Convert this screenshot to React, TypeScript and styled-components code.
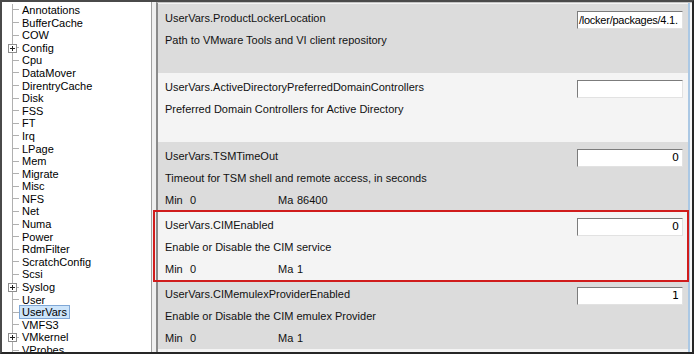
import React from "react";
import styled, { createGlobalStyle } from "styled-components";

const Global = createGlobalStyle`
  html, body { margin: 0; padding: 0; background: #fff; }
  body { font-family: "Liberation Sans", Arial, sans-serif; }
  * { box-sizing: border-box; }
`;

const Frame = styled.div`
  width: 694px;
  height: 354px;
  display: flex;
  border: 2px solid;
  border-color: #4a4a4a #262626 #262626 #4a4a4a;
  background: #f0f0f0;
  overflow: hidden;
`;

const Tree = styled.div`
  width: 150px;
  flex: none;
  background: #fff;
  border-right: 1px solid #a0a0a0;
  padding-top: 1.7px;
  display: flex;
  flex-direction: column;
  font-size: 11px;
  color: #000;
`;

const TreeItem = styled.div`
  height: 12.6px;
  display: flex;
  align-items: center;
  flex: none;
`;

const Connector = styled.div`
  position: relative;
  width: 17px;
  height: 100%;
  flex: none;
  background-image: linear-gradient(#b0b0b0, #b0b0b0), linear-gradient(#b0b0b0, #b0b0b0);
  background-size: 1px 100%, 7px 1px;
  background-position: 10px 0, 10px 50%;
  background-repeat: no-repeat;
`;

const Expander = styled.span`
  position: absolute;
  left: 6px;
  top: 50%;
  margin-top: -4px;
  width: 9px;
  height: 9px;
  border: 1px solid #8e8e8e;
  background-color: #fff;
  background-image: linear-gradient(#222, #222), linear-gradient(#222, #222);
  background-size: 5px 1px, 1px 5px;
  background-position: center, center;
  background-repeat: no-repeat;
`;

const Label = styled.span<{ $selected?: boolean }>`
  padding: 0 2px;
  line-height: 12px;
  border: 1px solid ${(p) => (p.$selected ? "#7fa7d6" : "transparent")};
  background: ${(p) => (p.$selected ? "#cce4fa" : "transparent")};
  white-space: nowrap;
`;

const Splitter = styled.div`
  width: 4px;
  flex: none;
  background: #f0f0f0;
`;

const Panel = styled.div`
  flex: 1;
  display: flex;
  background: #f7f7f7;
  border-left: 2px solid #8a8a8a;
  border-top: 1px solid #c4c4c4;
  padding-right: 2px;
`;

const Rows = styled.div`
  flex: 1;
  padding-top: 1px;
  background: #f4f4f4;
  border-right: 2px solid #abc8e4;
  display: flex;
  flex-direction: column;
`;

const Row = styled.div<{ $alt?: boolean; $marked?: boolean }>`
  position: relative;
  z-index: ${(p) => (p.$marked ? 1 : 0)};
  height: 69px;
  flex: none;
  display: flex;
  justify-content: space-between;
  background: ${(p) => (p.$alt ? "#f4f4f4" : "#dcdcdc")};
  ${(p) =>
    p.$marked &&
    `
    &::after {
      content: "";
      position: absolute;
      left: -5px;
      right: -1px;
      top: -1px;
      bottom: -2px;
      border: 2px solid #d01c1c;
      pointer-events: none;
    }
  `}
`;

const Info = styled.div`
  padding: 3px 0 0 7px;
  font-size: 11px;
  color: #111;
`;

const Line = styled.div`
  height: 22px;
  line-height: 22px;
  white-space: nowrap;
`;

const Limits = styled.div`
  height: 22px;
  line-height: 22px;
  display: grid;
  grid-template-columns: 25px 88px 19px auto;
  white-space: nowrap;
`;

const Field = styled.div<{ $align: "left" | "right" }>`
  margin: 7px 5px 0 0;
  width: 106px;
  height: 18px;
  background: #fff;
  border: 1px solid;
  border-color: #7c7c7c #e2e2e2 #e2e2e2 #7c7c7c;
  font-size: 11px;
  line-height: 16px;
  padding: ${(p) => (p.$align === "right" ? "0 3px 0 2px" : "0 0 0 1px")};
  letter-spacing: ${(p) => (p.$align === "right" ? "0" : "-0.25px")};
  text-align: ${(p) => p.$align};
  font-family: ${(p) => (p.$align === "right" ? '"DejaVu Sans", sans-serif' : '"Liberation Sans", Arial, sans-serif')};
  overflow: hidden;
  white-space: nowrap;
  color: #000;
`;

const treeItems: { name: string; expand?: boolean; selected?: boolean }[] = [
  { name: "Annotations" },
  { name: "BufferCache" },
  { name: "COW" },
  { name: "Config", expand: true },
  { name: "Cpu" },
  { name: "DataMover" },
  { name: "DirentryCache" },
  { name: "Disk" },
  { name: "FSS" },
  { name: "FT" },
  { name: "Irq" },
  { name: "LPage" },
  { name: "Mem" },
  { name: "Migrate" },
  { name: "Misc" },
  { name: "NFS" },
  { name: "Net" },
  { name: "Numa" },
  { name: "Power" },
  { name: "RdmFilter" },
  { name: "ScratchConfig" },
  { name: "Scsi" },
  { name: "Syslog", expand: true },
  { name: "User" },
  { name: "UserVars", selected: true },
  { name: "VMFS3" },
  { name: "VMkernel", expand: true },
  { name: "VProbes" },
];

type Setting = {
  key: string;
  desc: string;
  value: string;
  align: "left" | "right";
  min?: string;
  max?: string;
  marked?: boolean;
};

const settings: Setting[] = [
  { key: "UserVars.ProductLockerLocation", desc: "Path to VMware Tools and VI client repository", value: "/locker/packages/4.1.", align: "left" },
  { key: "UserVars.ActiveDirectoryPreferredDomainControllers", desc: "Preferred Domain Controllers for Active Directory", value: "", align: "left" },
  { key: "UserVars.TSMTimeOut", desc: "Timeout for TSM shell and remote access, in seconds", value: "0", align: "right", min: "0", max: "86400" },
  { key: "UserVars.CIMEnabled", desc: "Enable or Disable the CIM service", value: "0", align: "right", min: "0", max: "1", marked: true },
  { key: "UserVars.CIMemulexProviderEnabled", desc: "Enable or Disable the CIM emulex Provider", value: "1", align: "right", min: "0", max: "1" },
];

export default function App() {
  return (
    <>
      <Global />
      <Frame>
        <Tree>
          {treeItems.map((t) => (
            <TreeItem key={t.name}>
              <Connector>{t.expand && <Expander />}</Connector>
              <Label $selected={t.selected}>{t.name}</Label>
            </TreeItem>
          ))}
        </Tree>
        <Splitter />
        <Panel>
          <Rows>
            {settings.map((s, i) => (
              <Row key={s.key} $alt={i % 2 === 1} $marked={s.marked}>
                <Info>
                  <Line>{s.key}</Line>
                  <Line>{s.desc}</Line>
                  {s.min !== undefined && (
                    <Limits>
                      <span>Min</span>
                      <span>{s.min}</span>
                      <span>Ma</span>
                      <span>{s.max}</span>
                    </Limits>
                  )}
                </Info>
                <Field $align={s.align}>{s.value}</Field>
              </Row>
            ))}
          </Rows>
        </Panel>
      </Frame>
    </>
  );
}
